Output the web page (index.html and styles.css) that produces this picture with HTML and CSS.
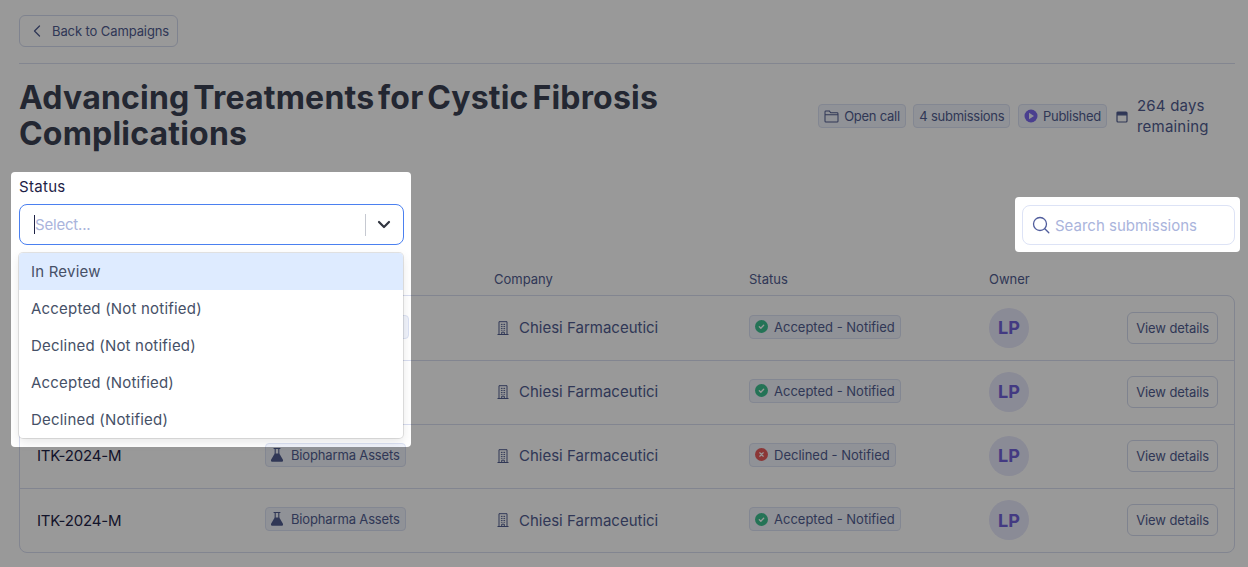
FILE: index.html
```html
<!DOCTYPE html>
<html lang="en">
<head>
<meta charset="utf-8">
<title>Advancing Treatments for Cystic Fibrosis Complications</title>
<link rel="stylesheet" href="styles.css">
</head>
<body>
<svg class="defs" width="0" height="0" aria-hidden="true">
  <symbol id="flask" viewBox="2 0 16 16"><path fill="none" stroke="currentColor" stroke-width="1.100" stroke-linecap="round" d="M5 1.500h6M6.200 1.500v5M9.800 1.500v5"/><path fill="currentColor" d="M5.700 6.500h4.600l3.500 6c.6 1.100 0 2.300-1.200 2.300H3.400c-1.200 0-1.800-1.200-1.200-2.300z"/></symbol>
  <symbol id="building" viewBox="0 0 12 14"><path fill="none" stroke="currentColor" stroke-width="1" d="M.5 13.500h11M2 13.500V.7h8v12.800M4.700 13.500v-2.300h2.600v2.300"/><path fill="none" stroke="currentColor" stroke-width="1" stroke-dasharray="1.200 .9" d="M4.400 2.800v7M6 2.800v7M7.600 2.800v7"/></symbol>
  <symbol id="check" viewBox="0 0 12 12"><circle cx="6" cy="6" r="6" fill="#3cc08f"/><path fill="none" stroke="#fff" stroke-width="1.200" stroke-linecap="round" stroke-linejoin="round" d="M4 6.200l1.400 1.400L8 4.800"/></symbol>
  <symbol id="cross" viewBox="0 0 12 12"><circle cx="6" cy="6" r="6" fill="#e85c5c"/><path fill="none" stroke="#fff" stroke-width="1.100" stroke-linecap="round" d="M4.400 4.400l3.200 3.200M7.600 4.400L4.400 7.600"/></symbol>
</svg>
<div class="page">
  <a class="back" href="#">
    <svg class="back-icon" viewBox="0 0 10 14" width="10" height="14"><path fill="none" stroke="currentColor" stroke-width="1.300" stroke-linecap="round" stroke-linejoin="round" d="M7.500 2L2.500 7l5 5"/></svg>
    Back to Campaigns
  </a>
  <hr class="rule">
  <header class="head">
    <h1 class="title">Advancing Treatments for Cystic Fibrosis Complications</h1>
    <div class="meta">
      <span class="chip chip-meta">
        <svg viewBox="0 0 16 14" width="15" height="13"><path fill="none" stroke="currentColor" stroke-width="1.100" stroke-linejoin="round" d="M1 3V2c0-.6.4-1 1-1h3.600l1.500 2H14c.6 0 1 .4 1 1v8c0 .6-.4 1-1 1H2c-.6 0-1-.4-1-1zM1 5h14"/></svg>
        Open call
      </span>
      <span class="chip chip-meta">4 submissions</span>
      <span class="chip chip-meta">
        <svg viewBox="0 0 14 14" width="14" height="14"><circle cx="7" cy="7" r="6.500" fill="#7b68ee"/><path fill="#eef0fb" d="M5 3.800l5 3.200-5 3.200z"/></svg>
        Published
      </span>
      <svg class="cal" viewBox="0 0 12 13" width="12" height="13"><path fill="none" stroke="currentColor" stroke-width="1.200" d="M1 4.800V11c0 .6.4 1 1 1h8c.6 0 1-.4 1-1V4.800M1 4.800V3c0-.6.4-1 1-1h8c.6 0 1 .4 1 1v1.800z"/><path fill="currentColor" d="M1 2h10v2.800H1z"/></svg>
      <span class="remaining">264 days remaining</span>
    </div>
  </header>

  <section class="filters">
    <div class="status-filter">
      <label class="filter-label">Status</label>
      <div class="select">
        <span class="caret"></span>
        <span class="placeholder">Select...</span>
        <span class="select-sep"></span>
        <svg class="select-chevron" viewBox="0 0 14 9" width="14" height="9"><path fill="none" stroke="currentColor" stroke-width="2.200" stroke-linecap="round" stroke-linejoin="round" d="M2 2l5 5 5-5"/></svg>
      </div>
      <ul class="menu">
        <li class="option option-active">In Review</li>
        <li class="option">Accepted (Not notified)</li>
        <li class="option">Declined (Not notified)</li>
        <li class="option">Accepted (Notified)</li>
        <li class="option">Declined (Notified)</li>
      </ul>
    </div>
    <div class="search">
      <svg viewBox="0 0 18 18" width="18" height="18"><circle cx="8" cy="8" r="6.500" fill="none" stroke="currentColor" stroke-width="1.300"/><path stroke="currentColor" stroke-width="1.300" stroke-linecap="round" d="M12.800 12.800l4 4"/></svg>
      <span class="search-text">Search submissions</span>
    </div>
  </section>

  <div class="cols">
    <span></span><span></span><span>Company</span><span>Status</span><span>Owner</span>
  </div>
  <div class="table">
    <div class="row">
      <span class="id"></span>
      <span class="cell-chip"><span class="chip chip-type chip-wide"></span></span>
      <span class="company"><svg width="12" height="14"><use href="#building"/></svg>Chiesi Farmaceutici</span>
      <span class="cell-chip"><span class="chip chip-status"><svg width="13" height="13"><use href="#check"/></svg>Accepted - Notified</span></span>
      <span class="avatar">LP</span>
      <a class="view" href="#">View details</a>
    </div>
    <div class="row">
      <span class="id"></span>
      <span class="cell-chip"></span>
      <span class="company"><svg width="12" height="14"><use href="#building"/></svg>Chiesi Farmaceutici</span>
      <span class="cell-chip"><span class="chip chip-status"><svg width="13" height="13"><use href="#check"/></svg>Accepted - Notified</span></span>
      <span class="avatar">LP</span>
      <a class="view" href="#">View details</a>
    </div>
    <div class="row">
      <span class="id">ITK-2024-M</span>
      <span class="cell-chip"><span class="chip chip-type"><svg width="16" height="16"><use href="#flask"/></svg>Biopharma Assets</span></span>
      <span class="company"><svg width="12" height="14"><use href="#building"/></svg>Chiesi Farmaceutici</span>
      <span class="cell-chip"><span class="chip chip-status"><svg width="13" height="13"><use href="#cross"/></svg>Declined - Notified</span></span>
      <span class="avatar">LP</span>
      <a class="view" href="#">View details</a>
    </div>
    <div class="row">
      <span class="id">ITK-2024-M</span>
      <span class="cell-chip"><span class="chip chip-type"><svg width="16" height="16"><use href="#flask"/></svg>Biopharma Assets</span></span>
      <span class="company"><svg width="12" height="14"><use href="#building"/></svg>Chiesi Farmaceutici</span>
      <span class="cell-chip"><span class="chip chip-status"><svg width="13" height="13"><use href="#check"/></svg>Accepted - Notified</span></span>
      <span class="avatar">LP</span>
      <a class="view" href="#">View details</a>
    </div>
  </div>
</div>
<div class="tour-overlay">
  <div class="spot spot-status"></div>
  <div class="spot spot-search"></div>
</div>
</body>
</html>
```
FILE: styles.css
```css
* { box-sizing: border-box; }
html, body { margin: 0; height: 100%; }
body {
  background: #fff;
  color: #454f78;
  font-family: Inter, "Noto Sans", sans-serif;
  overflow: hidden;
}
.defs { position: absolute; }
svg { display: block; flex: none; }
.page { padding: 15px 13px 0 19px; }

.back {
  display: inline-flex;
  align-items: center;
  gap: 10px;
  height: 32px;
  padding: 0 8px 0 12px;
  border: 1px solid #d4daee;
  border-radius: 6px;
  font-size: 13px;
  letter-spacing: -.1px;
  color: #4f5c8f;
  text-decoration: none;
}
.rule { margin: 16px 0 0; border: 0; border-top: 1px solid #dadff0; }

.head { display: flex; align-items: center; margin-top: 16px; }
.title {
  width: 680px;
  margin: 0;
  font-size: 32px;
  line-height: 36px;
  font-weight: 700;
  letter-spacing: .2px;
  word-spacing: -4px;
  color: #3a4152;
}
.meta { display: flex; align-items: center; gap: 7.500px; margin-left: auto; margin-right: 14px; }
.chip {
  display: inline-flex;
  align-items: center;
  gap: 5px;
  height: 24px;
  padding: 0 5px;
  border: 1px solid #dbe1f3;
  border-radius: 4px;
  background: #f0f3fb;
  font-size: 13px;
  letter-spacing: -.25px;
  color: #4f5c8f;
  white-space: nowrap;
}
.cal { color: #4f5c8f; margin-left: 1.500px; }
.remaining { width: 84px; margin-left: 1.500px; font-size: 15px; line-height: 21px; letter-spacing: .2px; color: #4f5c8f; }

.filters { display: flex; justify-content: space-between; align-items: flex-end; margin-top: 26px; }
.status-filter { position: relative; width: 384px; }
.filter-label { display: block; margin-bottom: 9px; font-size: 15px; line-height: 17px; letter-spacing: .3px; color: #1d2145; }
.select {
  display: flex;
  align-items: center;
  height: 41px;
  margin-right: -1px;
  padding-left: 14px;
  border: 1.500px solid #4a80f0;
  border-radius: 8px;
  background: #fff;
}
.caret { width: 1px; height: 19px; background: #1d2145; }
.placeholder { font-size: 15px; letter-spacing: -.2px; color: #aab4dc; }
.select-sep { width: 1px; height: 22px; margin-left: auto; background: #c6c9d1; }
.select-chevron { margin: 0 12px 0 11px; color: #30343f; }

.menu {
  position: absolute;
  left: 0;
  right: 0;
  top: 75px;
  z-index: 5;
  margin: 0;
  padding: 0;
  list-style: none;
  background: #fff;
  border-radius: 4px;
  overflow: hidden;
  box-shadow: 0 0 0 1px rgba(0, 0, 0, .1), 0 4px 11px rgba(0, 0, 0, .1);
}
.option { height: 37px; padding: 0 12px; font-size: 15px; line-height: 37px; letter-spacing: .2px; color: #454f66; }
.option-active { background: #deebff; }

.search {
  display: flex;
  align-items: center;
  gap: 5px;
  width: 213px;
  height: 40px;
  padding-left: 9px;
  border: 1px solid #dde3f6;
  border-radius: 8px;
  color: #4f5c9c;
}
.search-text { font-size: 15px; color: #aab4dc; }

.cols, .row {
  display: grid;
  grid-template-columns: 228px 229px 255px 240px 1fr;
  align-items: center;
}
.cols { height: 32px; margin-top: 18px; padding-left: 18px; font-size: 13px; color: #4f5c8f; }
.table { padding-top: 1px; border: 1px solid #d8ddf0; border-radius: 8px; }
.row { position: relative; height: 64px; padding: 0 0 2px 17px; border-bottom: 1px solid #d8ddf0; }
.row:last-child { height: 63px; padding-bottom: 1px; border-bottom: 0; }
.id { font-size: 15px; letter-spacing: -.2px; color: #1d2145; }
.cell-chip { display: flex; margin-top: -2px; }
.chip-type { gap: 4px; padding: 0 5px; height: 24px; letter-spacing: -.15px; }
.chip-wide { width: 144px; }
.chip-status { gap: 6px; padding: 0 5px; letter-spacing: 0; }
.company { display: flex; align-items: center; gap: 10px; padding-left: 3px; font-size: 15px; color: #4f5c8f; }
.avatar {
  display: flex;
  align-items: center;
  justify-content: center;
  width: 40px;
  height: 40px;
  border-radius: 50%;
  background: #e6e7fa;
  font-size: 18px;
  font-weight: 700;
  color: #6f60d8;
}
.view {
  position: absolute;
  right: 16px;
  top: 15px;
  display: flex;
  align-items: center;
  height: 32px;
  padding: 0 8px;
  border: 1px solid #d4daee;
  border-radius: 6px;
  font-size: 13px;
  letter-spacing: -.1px;
  color: #4f5c8f;
  text-decoration: none;
}

.tour-overlay {
  position: fixed;
  inset: 0;
  z-index: 10;
  background: rgba(0, 0, 0, .4);
  mix-blend-mode: hard-light;
}
.spot { position: absolute; background: gray; border-radius: 4px; }
.spot-status { left: 11px; top: 172px; width: 400px; height: 275px; }
.spot-search { left: 1015px; top: 197px; width: 225px; height: 55px; }
```
